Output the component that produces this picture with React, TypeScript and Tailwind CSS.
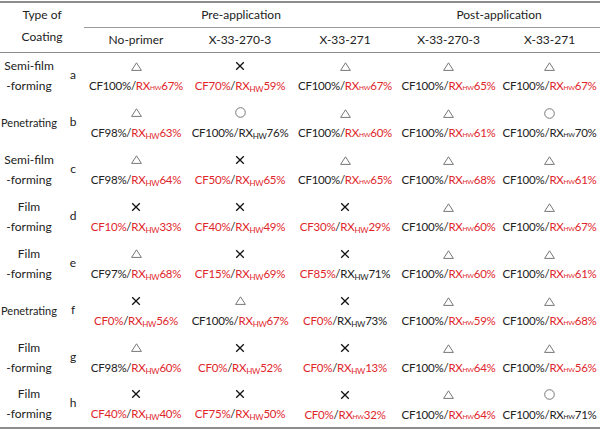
type Mark = "tri" | "x" | "o";
type Cell = [Mark, string, boolean, string, boolean, boolean?];

const rows: { name: string[]; small?: boolean; letter: string; cells: Cell[] }[] = [
  {
    name: ["Semi-film", "-forming"],
    letter: "a",
    cells: [
      ["tri", "100", false, "67", true, true],
      ["x", "70", true, "59", true],
      ["tri", "100", false, "67", true, true],
      ["tri", "100", false, "65", true, true],
      ["tri", "100", false, "67", true, true],
    ],
  },
  {
    name: ["Penetrating"],
    small: true,
    letter: "b",
    cells: [
      ["tri", "98", false, "63", true],
      ["o", "100", false, "76", false],
      ["tri", "100", false, "60", true, true],
      ["tri", "100", false, "61", true, true],
      ["o", "100", false, "70", false, true],
    ],
  },
  {
    name: ["Semi-film", "-forming"],
    letter: "c",
    cells: [
      ["tri", "98", false, "64", true],
      ["x", "50", true, "65", true],
      ["tri", "100", false, "65", true, true],
      ["tri", "100", false, "68", true, true],
      ["tri", "100", false, "61", true, true],
    ],
  },
  {
    name: ["Film", "-forming"],
    letter: "d",
    cells: [
      ["x", "10", true, "33", true],
      ["x", "40", true, "49", true],
      ["x", "30", true, "29", true],
      ["tri", "100", false, "60", true, true],
      ["tri", "100", false, "67", true, true],
    ],
  },
  {
    name: ["Film", "-forming"],
    letter: "e",
    cells: [
      ["tri", "97", false, "68", true],
      ["x", "15", true, "69", true],
      ["x", "85", true, "71", false],
      ["tri", "100", false, "60", true, true],
      ["tri", "100", false, "61", true, true],
    ],
  },
  {
    name: ["Penetrating"],
    small: true,
    letter: "f",
    cells: [
      ["x", "0", true, "56", true],
      ["tri", "100", false, "67", true],
      ["x", "0", true, "73", false],
      ["tri", "100", false, "59", true, true],
      ["tri", "100", false, "68", true, true],
    ],
  },
  {
    name: ["Film", "-forming"],
    letter: "g",
    cells: [
      ["tri", "98", false, "60", true],
      ["x", "0", true, "52", true],
      ["x", "0", true, "13", true],
      ["tri", "100", false, "64", true, true],
      ["tri", "100", false, "56", true, true],
    ],
  },
  {
    name: ["Film", "-forming"],
    letter: "h",
    cells: [
      ["x", "40", true, "40", true],
      ["x", "75", true, "50", true],
      ["x", "0", true, "32", true, true],
      ["tri", "100", false, "64", true, true],
      ["o", "100", false, "71", false, true],
    ],
  },
];

function Symbol({ kind }: { kind: Mark }) {
  if (kind === "tri")
    return (
      <svg width="11" height="9" viewBox="0 0 11 9" className="inline-block">
        <path d="M5.5 0.8 L10.4 8.4 L0.6 8.4 Z" fill="none" stroke="#777" strokeWidth="1" />
      </svg>
    );
  if (kind === "x")
    return (
      <svg width="10" height="10" viewBox="0 0 10 10" className="inline-block">
        <path d="M1.2 1.2 L8.8 8.8 M8.8 1.2 L1.2 8.8" stroke="#111" strokeWidth="1.3" />
      </svg>
    );
  return (
    <svg width="11" height="11" viewBox="0 0 11 11" className="inline-block">
      <circle cx="5.5" cy="5.5" r="4.8" fill="none" stroke="#777" strokeWidth="1" />
    </svg>
  );
}

function Value({ cell }: { cell: Cell }) {
  const [, cf, cfRed, rx, rxRed, tiny] = cell;
  return (
    <span className="whitespace-nowrap text-[11.5px] tracking-[-0.25px]">
      <span className={cfRed ? "text-[#e0262b]" : ""}>CF{cf}%</span>/
      <span className={rxRed ? "text-[#e0262b]" : ""}>
        RX<span className={tiny ? "text-[6.5px]" : "text-[8px] align-[-2px]"}>HW</span>
        {rx}%
      </span>
    </span>
  );
}

export default function App() {
  return (
    <div className="w-[600px] h-[430px] bg-white pt-[1px] text-[#222] font-['Lato','Open_Sans',sans-serif] text-[12px]">
      <table className="w-[600px] table-fixed border-collapse border-t-2 border-b-2 border-[#8c8c8c]">
        <colgroup>
          <col className="w-[58px]" />
          <col className="w-[26px]" />
          <col className="w-[104px]" />
          <col className="w-[104px]" />
          <col className="w-[106px]" />
          <col className="w-[101px]" />
          <col className="w-[101px]" />
        </colgroup>
        <thead>
          <tr className="h-[25px]">
            <th rowSpan={2} colSpan={2} className="font-normal border-b border-[#8c8c8c] leading-[22px] align-middle pb-[2px]">
              Type of
              <br />
              Coating
            </th>
            <th colSpan={3} className="font-normal border-b border-[#9a9a9a]">
              Pre-application
            </th>
            <th colSpan={2} className="font-normal border-b border-[#9a9a9a]">
              Post-application
            </th>
          </tr>
          <tr className="h-[25px] border-b border-[#8c8c8c]">
            <th className="font-normal">No-primer</th>
            <th className="font-normal">X-33-270-3</th>
            <th className="font-normal">X-33-271</th>
            <th className="font-normal">X-33-270-3</th>
            <th className="font-normal">X-33-271</th>
          </tr>
        </thead>
        <tbody>
          {rows.map((r) => (
            <tr key={r.letter} className="h-[47px]">
              <td className={`text-center leading-[20px] ${r.small ? "text-[11px]" : ""}`}>
                {r.name.map((n) => (
                  <div key={n}>{n}</div>
                ))}
              </td>
              <td className="text-center pl-[4px] pb-[2px]">{r.letter}</td>
              {r.cells.map((c, i) => (
                <td key={i} className="text-center leading-[20px] pt-[3px]">
                  <div className="h-[20px] flex items-center justify-center">
                    <Symbol kind={c[0]} />
                  </div>
                  <div>
                    <Value cell={c} />
                  </div>
                </td>
              ))}
            </tr>
          ))}
        </tbody>
      </table>
    </div>
  );
}
